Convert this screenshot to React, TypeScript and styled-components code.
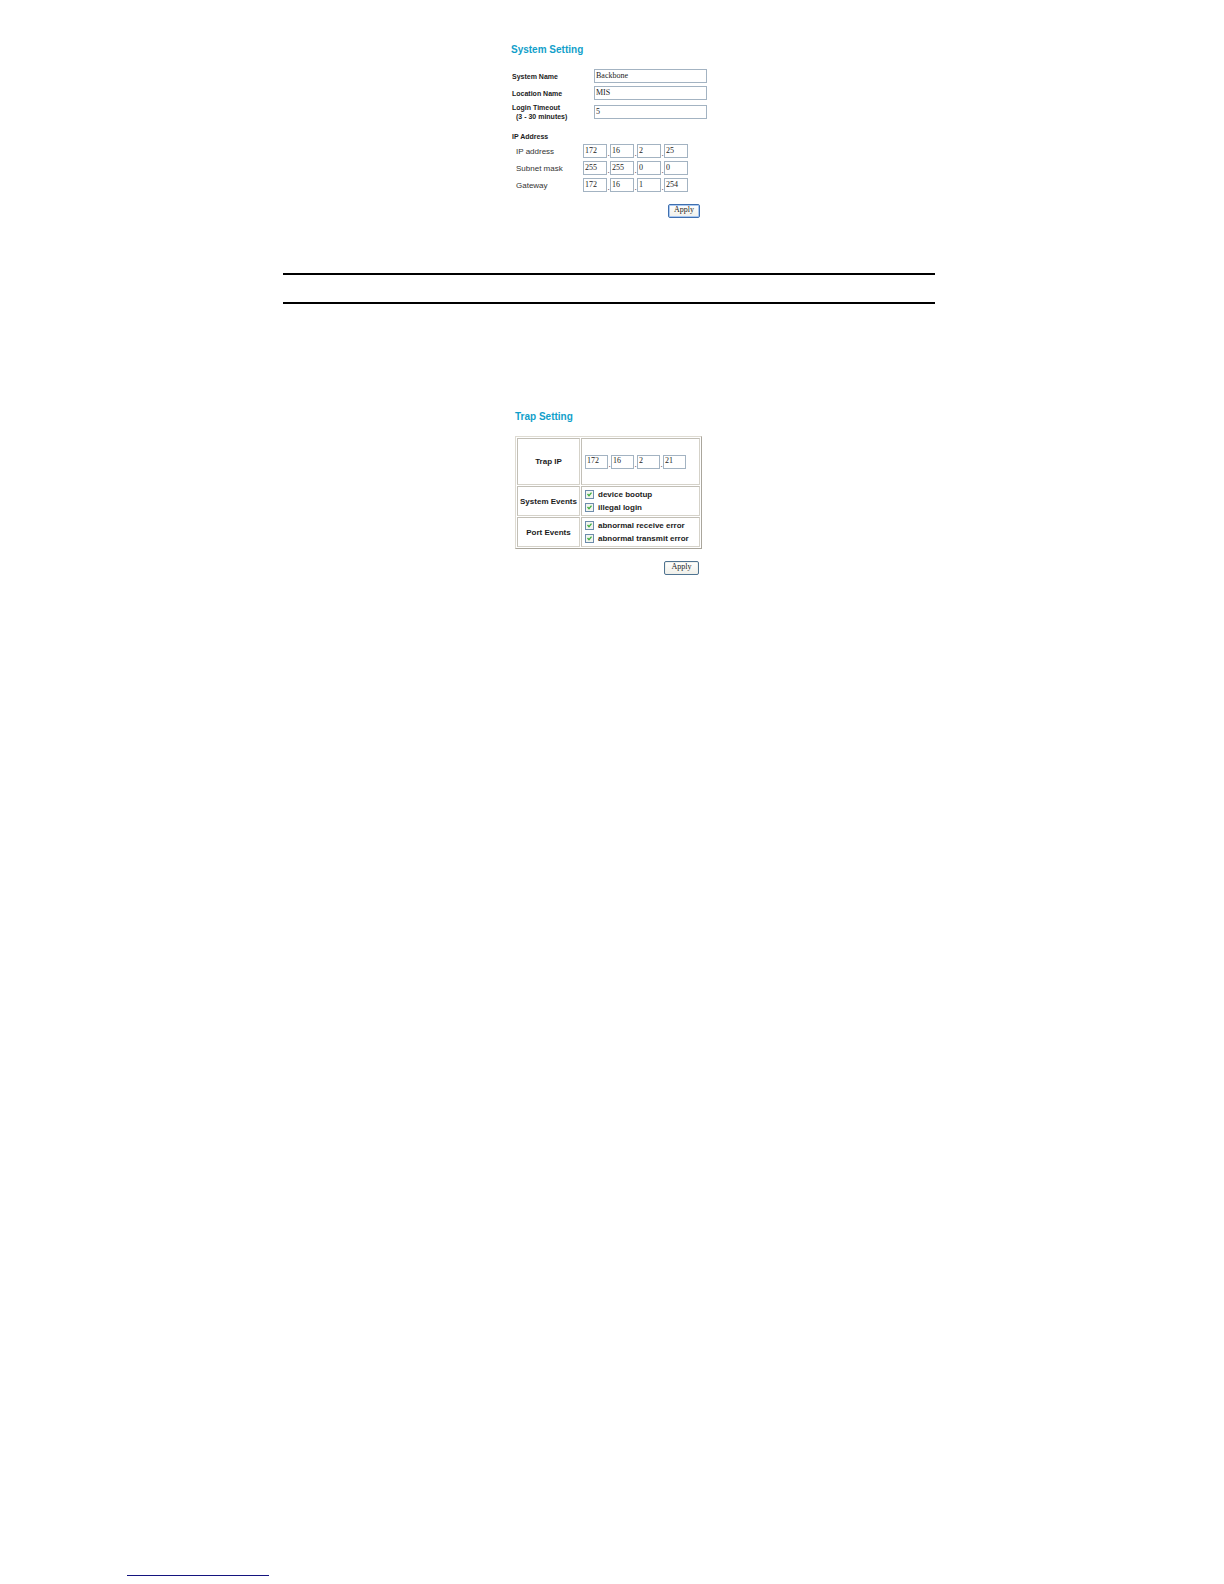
import React from "react";
import styled, { createGlobalStyle } from "styled-components";

const sans = `"Liberation Sans", Arial, Helvetica, sans-serif`;
const serif = `"Liberation Serif", "Times New Roman", serif`;

const GlobalStyle = createGlobalStyle`
  *, *::before, *::after { box-sizing: border-box; }
  body { margin: 0; background: #fff; color: #1c1c1c; font-family: ${sans}; }
`;

const Page = styled.div`
  display: flex;
  flex-direction: column;
  min-height: 100vh;
`;

const Main = styled.main`
  flex: 1;
  display: flex;
  flex-direction: column;
  align-items: center;
  padding: 44px 289px 0 283px;
`;

const Panel = styled.form<{ $width: number }>`
  display: flex;
  flex-direction: column;
  width: ${(p) => p.$width}px;
`;

const Title = styled.h2`
  margin: 0 0 13px;
  font-size: 10px;
  line-height: 12px;
  font-weight: bold;
  color: #129fca;
`;

const Fields = styled.div`
  display: flex;
  flex-direction: column;
  gap: 3px;
`;

const FieldRow = styled.div`
  display: grid;
  grid-template-columns: 82px 1fr;
  align-items: center;
  padding-left: 1px;
`;

const FieldLabel = styled.label`
  font-size: 7px;
  line-height: 9px;
  font-weight: bold;
`;

const Hint = styled.span`
  display: block;
  padding-left: 4px;
`;

const TextBox = styled.input`
  display: block;
  width: 100%;
  height: 14px;
  margin: 0;
  padding: 0 1px 2px;
  border: 1px solid #a3b3c2;
  border-radius: 0;
  background: #fff;
  color: #1c1c1c;
  font-family: ${serif};
  font-size: 8px;
  line-height: 10px;
`;

const GroupHeading = styled.h3`
  margin: 11px 0 2px;
  padding-left: 1px;
  font-size: 7px;
  line-height: 10px;
  font-weight: bold;
`;

const AddressRow = styled.div`
  display: grid;
  grid-template-columns: 67px auto;
  justify-content: start;
  align-items: center;
  padding-left: 5px;
`;

const AddressLabel = styled.label`
  font-size: 8px;
  line-height: 9px;
  color: #333;
`;

const Octets = styled.div<{ $box: number; $dot: number }>`
  display: grid;
  grid-template-columns: repeat(3, ${(p) => p.$box}px ${(p) => p.$dot}px) ${(p) => p.$box}px;
  align-items: end;
`;

const Dot = styled.span`
  font-size: 8px;
  line-height: 9px;
  text-align: center;
`;

const Actions = styled.div<{ $inset: number }>`
  display: flex;
  justify-content: flex-end;
  margin-top: 12px;
  padding-right: ${(p) => p.$inset}px;
`;

const ApplyButton = styled.button<{ $focused?: boolean }>`
  width: ${(p) => (p.$focused ? 32 : 35)}px;
  height: 14px;
  padding: 0 0 2px;
  border: 1px solid ${(p) => (p.$focused ? "#3f6fae" : "#4f7391")};
  border-radius: 2px;
  background: linear-gradient(#fff, #f0f0ea);
  box-shadow: inset 0 0 0 1px ${(p) => (p.$focused ? "#a9c8f2" : "#f0f0ea")};
  color: #1c1c1c;
  font-family: ${serif};
  font-size: 8px;
  line-height: 10px;
`;

const SectionBand = styled.div`
  width: 100%;
  height: 31px;
  margin: 55px 0 107px;
  border-top: 2px solid #000;
  border-bottom: 2px solid #000;
`;

const TrapTable = styled.table`
  width: 187px;
  table-layout: fixed;
  border: 1px solid;
  border-color: #dedbd2 #aaa69c #aaa69c #dedbd2;
  border-collapse: separate;
  border-spacing: 1px;
`;

const HeadCell = styled.th<{ $height: number }>`
  width: 63px;
  height: ${(p) => p.$height}px;
  padding: 0;
  border: 1px solid;
  border-color: #c2bfb6 #d5d2c9 #d5d2c9 #c2bfb6;
  font-size: 8px;
  line-height: 13px;
  text-align: center;
`;

const DataCell = styled.td`
  padding: 0 0 0 3px;
  border: 1px solid;
  border-color: #c2bfb6 #d5d2c9 #d5d2c9 #c2bfb6;
`;

const EventLabel = styled.label`
  display: flex;
  align-items: center;
  gap: 4px;
  height: 13px;
  font-size: 8px;
  line-height: 13px;
  font-weight: bold;
  white-space: nowrap;
`;

const tick = encodeURIComponent(
  `<svg xmlns="http://www.w3.org/2000/svg" viewBox="0 0 7 7"><path d="M1.5 3L3 4.7L5.5 1.7" fill="none" stroke="#3fae3f" stroke-width="1.3"/></svg>`
);

const Tick = styled.input`
  appearance: none;
  flex: none;
  width: 9px;
  height: 9px;
  margin: 0;
  border: 1px solid #6d8cab;
  background: #f2f5f0;

  &:checked {
    background-image: url("data:image/svg+xml,${tick}");
    background-size: 7px 7px;
  }
`;

const Footer = styled.footer`
  padding: 0 127px 8px;
`;

const FooterRule = styled.hr`
  width: 142px;
  margin: 0;
  border: 0;
  border-top: 1px solid #14147f;
`;

type AddressProps = { id: string; name: string; values: string[]; box: number; dot: number };

function Address({ id, name, values, box, dot }: AddressProps) {
  return (
    <Octets $box={box} $dot={dot} role="group" aria-label={name}>
      {values.map((value, i) => (
        <React.Fragment key={i}>
          {i > 0 && <Dot>.</Dot>}
          <TextBox
            id={i === 0 ? id : `${id}-${i + 1}`}
            aria-label={`${name} part ${i + 1}`}
            defaultValue={value}
          />
        </React.Fragment>
      ))}
    </Octets>
  );
}

const addresses = [
  { id: "ip", name: "IP address", values: ["172", "16", "2", "25"] },
  { id: "mask", name: "Subnet mask", values: ["255", "255", "0", "0"] },
  { id: "gateway", name: "Gateway", values: ["172", "16", "1", "254"] },
];

const eventGroups = [
  { name: "System Events", events: ["device bootup", "illegal login"] },
  { name: "Port Events", events: ["abnormal receive error", "abnormal transmit error"] },
];

export default function App() {
  return (
    <Page>
      <GlobalStyle />
      <Main>
        <Panel $width={196} onSubmit={(e) => e.preventDefault()}>
          <Title>System Setting</Title>
          <Fields>
            <FieldRow>
              <FieldLabel htmlFor="system-name">System Name</FieldLabel>
              <TextBox id="system-name" defaultValue="Backbone" />
            </FieldRow>
            <FieldRow>
              <FieldLabel htmlFor="location-name">Location Name</FieldLabel>
              <TextBox id="location-name" defaultValue="MIS" />
            </FieldRow>
            <FieldRow>
              <FieldLabel htmlFor="login-timeout">
                Login Timeout
                <Hint>(3 - 30 minutes)</Hint>
              </FieldLabel>
              <TextBox id="login-timeout" defaultValue="5" />
            </FieldRow>
          </Fields>
          <GroupHeading>IP Address</GroupHeading>
          <Fields>
            {addresses.map((a) => (
              <AddressRow key={a.id}>
                <AddressLabel htmlFor={a.id}>{a.name}</AddressLabel>
                <Address {...a} box={24} dot={3} />
              </AddressRow>
            ))}
          </Fields>
          <Actions $inset={7}>
            <ApplyButton $focused>Apply</ApplyButton>
          </Actions>
        </Panel>

        <SectionBand />

        <Panel $width={188} onSubmit={(e) => e.preventDefault()}>
          <Title>Trap Setting</Title>
          <TrapTable>
            <tbody>
              <tr>
                <HeadCell scope="row" $height={47}>
                  <label htmlFor="trap">Trap IP</label>
                </HeadCell>
                <DataCell>
                  <Address id="trap" name="Trap IP" values={["172", "16", "2", "21"]} box={23} dot={3} />
                </DataCell>
              </tr>
              {eventGroups.map((group) => (
                <tr key={group.name}>
                  <HeadCell scope="row" $height={30}>
                    {group.name}
                  </HeadCell>
                  <DataCell>
                    {group.events.map((event) => (
                      <EventLabel key={event}>
                        <Tick type="checkbox" defaultChecked />
                        {event}
                      </EventLabel>
                    ))}
                  </DataCell>
                </tr>
              ))}
            </tbody>
          </TrapTable>
          <Actions $inset={4}>
            <ApplyButton>Apply</ApplyButton>
          </Actions>
        </Panel>
      </Main>
      <Footer>
        <FooterRule />
      </Footer>
    </Page>
  );
}
